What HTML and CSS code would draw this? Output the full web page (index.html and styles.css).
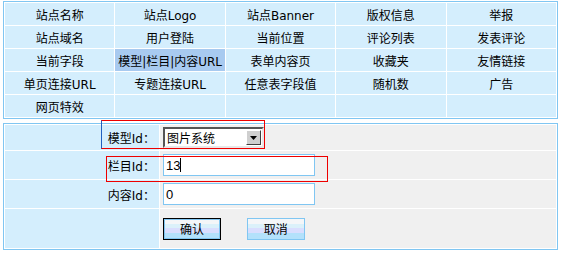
FILE: index.html
```html
<!DOCTYPE html>
<html lang="zh-CN">
<head>
    <meta charset="UTF-8">
    <title>插入标签</title>
    <link rel="stylesheet" href="styles.css">
</head>
<body>

    <table class="tags">
        <tr>
            <td>站点名称</td>
            <td>站点Logo</td>
            <td>站点Banner</td>
            <td>版权信息</td>
            <td>举报</td>
        </tr>
        <tr>
            <td>站点域名</td>
            <td>用户登陆</td>
            <td>当前位置</td>
            <td>评论列表</td>
            <td>发表评论</td>
        </tr>
        <tr>
            <td>当前字段</td>
            <td class="cur">模型|栏目|内容URL</td>
            <td>表单内容页</td>
            <td>收藏夹</td>
            <td>友情链接</td>
        </tr>
        <tr>
            <td>单页连接URL</td>
            <td>专题连接URL</td>
            <td>任意表字段值</td>
            <td>随机数</td>
            <td>广告</td>
        </tr>
        <tr>
            <td>网页特效</td>
            <td></td>
            <td></td>
            <td></td>
            <td></td>
        </tr>
    </table>

    <div class="form-wrap">
        <table class="form">
            <tr class="row-model">
                <th>模型Id：</th>
                <td>
                    <div class="sel">
                        <span class="sel-text">图片系统</span>
                        <span class="sel-btn">
                            <svg width="7" height="4" viewBox="0 0 7 4"><path d="M0 0h7L3.5 4z" fill="#000"/></svg>
                        </span>
                    </div>
                </td>
            </tr>
            <tr class="row-input">
                <th>栏目Id：</th>
                <td class="field">
                    <input type="text" class="txt" value="13">
                    <span class="caret"></span>
                </td>
            </tr>
            <tr class="row-input">
                <th>内容Id：</th>
                <td><input type="text" class="txt" value="0"></td>
            </tr>
            <tr class="row-btns">
                <th></th>
                <td>
                    <button class="btn btn-ok">确认</button>
                    <button class="btn">取消</button>
                </td>
            </tr>
        </table>

        <div class="mark mark-model"></div>
        <div class="mark mark-cat"></div>
    </div>

</body>
</html>
```

FILE: styles.css
```css
/* General */
body {
    margin: 1px 3px;
    font-family: "DejaVu Sans", "Noto Sans CJK SC", sans-serif;
    font-size: 12px;
    color: #000;
    background: #fff;
}

table {
    border-collapse: separate;
    border-spacing: 1px;
    border: 1px solid #80c6f2;
    background: #fff;
    width: 555px;
}

td, th {
    padding: 0;
    font-weight: normal;
}

/* Tag grid */
.tags td {
    width: 20%;
    height: 22px;
    background: #d4eefd;
    text-align: center;
    white-space: nowrap;
}

.tags td.cur {
    background: #a8caf0;
}

/* Form */
.form-wrap {
    position: relative;
    margin-top: 4px;
}

.form th {
    width: 150px;
    background: #d4eefd;
    text-align: right;
    padding-right: 4px;
}

.form td {
    background: #f0f0f0;
    padding-left: 3px;
}

.row-model th, .row-model td { height: 25px; }
.row-input th, .row-input td { height: 28px; }
.row-btns th, .row-btns td { height: 39px; }

.sel {
    display: flex;
    align-items: center;
    width: 97px;
    height: 17px;
    background: #fff;
    border-style: solid;
    border-width: 2px;
    border-color: #555 #e8e8e8 #e8e8e8 #555;
}

.sel-text {
    flex: 1;
    padding-left: 2px;
}

.sel-btn {
    display: flex;
    align-items: center;
    justify-content: center;
    width: 13px;
    height: 13px;
    margin-right: 1px;
    background: #cfcfcf;
    border: 1px solid;
    border-color: #fff #404040 #404040 #fff;
}

.txt {
    display: block;
    box-sizing: border-box;
    width: 152px;
    height: 22px;
    margin: 0;
    padding: 0 2px;
    border: 1px solid #80c6f2;
    background: #fff;
    font-family: "Liberation Sans", "Noto Sans CJK SC", sans-serif;
    font-size: 13px;
    color: #000;
    outline: none;
}

.field {
    position: relative;
}

.caret {
    position: absolute;
    left: 20px;
    top: 7px;
    width: 1px;
    height: 14px;
    background: #000;
}

.btn {
    box-sizing: border-box;
    width: 58px;
    height: 22px;
    margin: 0 22px 0 0;
    padding: 0;
    border: 1px solid #80c6f2;
    background: linear-gradient(#f4f6f8 0, #f4f6f8 25%, #dbf1fa 25%, #dbf1fa 45%, #d9defe 45%, #d9defe 72%, #b3e1fb 72%);
    font-family: "DejaVu Sans", "Noto Sans CJK SC", sans-serif;
    font-size: 12px;
    color: #000;
    vertical-align: middle;
}

.btn-ok {
    border: 1px solid #000;
    box-shadow: inset 0 0 0 1px #80c6f2;
}

/* Annotation boxes */
.mark {
    position: absolute;
    border: 1px solid #e00;
}

.mark-model {
    left: 98px;
    top: -3px;
    width: 162px;
    height: 27px;
    border-left-color: #2060c0;
}

.mark-cat {
    left: 103px;
    top: 33px;
    width: 220px;
    height: 24px;
}
```
